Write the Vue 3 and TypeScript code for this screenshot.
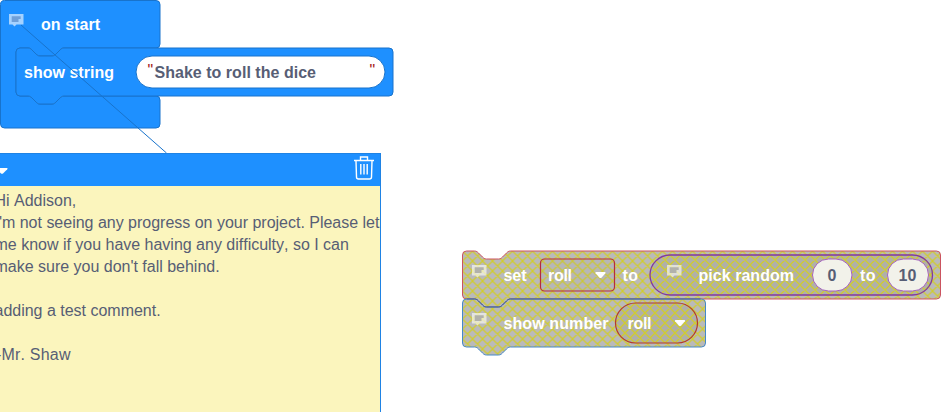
<script setup lang="ts">
interface Label {
  text: string
  x: number
  y: number
  width: number
  tone?: string
}

const labels: Label[] = [
  { text: 'on start', x: 41, y: 30, width: 59 },
  { text: 'show string', x: 24, y: 78, width: 90 },
  { text: 'Shake to roll the dice', x: 154.5, y: 78, width: 161.5, tone: 'dark' },
  { text: 'set', x: 503.5, y: 281, width: 23 },
  { text: 'roll', x: 548, y: 281, width: 24 },
  { text: 'to', x: 622.5, y: 281, width: 15.5 },
  { text: 'pick random', x: 698.5, y: 281, width: 95.5 },
  { text: '0', x: 827.5, y: 281, width: 9, tone: 'dark' },
  { text: 'to', x: 860, y: 281, width: 15.5 },
  { text: '10', x: 898.5, y: 281, width: 18, tone: 'dark' },
  { text: 'show number', x: 503.5, y: 329, width: 105 },
  { text: 'roll', x: 627.5, y: 329, width: 24 },
]

const commentIcons = [
  { x: 9, y: 14, tone: 'on-blue' },
  { x: 472, y: 265, tone: 'muted' },
  { x: 667, y: 265, tone: 'muted' },
  { x: 472, y: 313, tone: 'muted' },
]

const arrows = [
  { x: 595, y: 272 },
  { x: 674.5, y: 320 },
]

const hatches = [
  { id: 'hatch-set', x: 462.5, y: 251, tone: 'outer' },
  { id: 'hatch-show', x: 462.5, y: 299, tone: 'outer' },
  { id: 'hatch-inner', x: 650, y: 255, tone: 'inner' },
  { id: 'hatch-value', x: 615, y: 303, tone: 'inner' },
]

const note = `Hi Addison,
I'm not seeing any progress on your project. Please let
me know if you have having any difficulty, so I can
make sure you don't fall behind.

adding a test comment.
`
</script>

<template>
  <main class="workspace">
    <svg class="blocks" width="941" height="412" viewBox="0 0 941 412">
      <defs>
        <pattern v-for="hatch in hatches" :id="hatch.id" :key="hatch.id" :x="hatch.x" :y="hatch.y" width="10" height="10" patternUnits="userSpaceOnUse">
          <rect :class="hatch.tone" width="10" height="10" />
          <path class="hatch-line" d="M-1 -1L11 11M11 -1L-1 11M-1 9L1 11M9 -1L11 1M-1 1L1 -1M9 11L11 9" />
        </pattern>
      </defs>

      <path class="event" d="M.5 4.5a4 4 0 0 1 4-4H156a4 4 0 0 1 4 4V44a4 4 0 0 1-4 4H64c-2 0-3 1-4 2l-4 4c-1 1-2 2-4 2H40c-2 0-3-1-4-2l-4-4c-1-1-2-2-4-2h-8a4 4 0 0 0-4 4v40a4 4 0 0 0 4 4h8c2 0 3 1 4 2l4 4c1 1 2 2 4 2h12c2 0 3-1 4-2l4-4c1-1 2-2 4-2h92a4 4 0 0 1 4 4v24a4 4 0 0 1-4 4H4.500a4 4 0 0 1-4-4z" />
      <path class="event" d="M16 52a4 4 0 0 1 4-4h8c2 0 3 1 4 2l4 4c1 1 2 2 4 2h12c2 0 3-1 4-2l4-4c1-1 2-2 4-2h325a4 4 0 0 1 4 4v40a4 4 0 0 1-4 4H64c-2 0-3 1-4 2l-4 4c-1 1-2 2-4 2H40c-2 0-3-1-4-2l-4-4c-1-1-2-2-4-2h-8a4 4 0 0 1-4-4z" />
      <rect class="string-field" x="136" y="56" width="249" height="32" rx="16" />

      <path class="set-block" fill="url(#hatch-set)" d="M462.500 255a4 4 0 0 1 4-4h8c2 0 3 1 4 2l4 4c1 1 2 2 4 2h12c2 0 3-1 4-2l4-4c1-1 2-2 4-2h426a4 4 0 0 1 4 4v40a4 4 0 0 1-4 4h-426c-2 0-3 1-4 2l-4 4c-1 1-2 2-4 2h-12c-2 0-3-1-4-2l-4-4c-1-1-2-2-4-2h-8a4 4 0 0 1-4-4z" />
      <path class="show-block" fill="url(#hatch-show)" d="M462.500 303a4 4 0 0 1 4-4h8c2 0 3 1 4 2l4 4c1 1 2 2 4 2h12c2 0 3-1 4-2l4-4c1-1 2-2 4-2h191a4 4 0 0 1 4 4v40a4 4 0 0 1-4 4h-191c-2 0-3 1-4 2l-4 4c-1 1-2 2-4 2h-12c-2 0-3-1-4-2l-4-4c-1-1-2-2-4-2h-8a4 4 0 0 1-4-4z" />
      <path class="seam" d="M466.500 299h8c2 0 3 1 4 2l4 4c1 1 2 2 4 2h12c2 0 3-1 4-2l4-4c1-1 2-2 4-2h190" />
      <rect class="dropdown" x="540.500" y="259" width="74" height="32" rx="4" />
      <rect class="random-block" fill="url(#hatch-inner)" x="650" y="255" width="282.500" height="40" rx="20" />
      <rect class="number-field" x="812.500" y="259" width="39.500" height="32" rx="16" />
      <rect class="number-field" x="887.500" y="259" width="41" height="32" rx="16" />
      <rect class="variable" fill="url(#hatch-value)" x="615.500" y="303" width="82" height="40" rx="20" />

      <g v-for="icon in commentIcons" :key="`${icon.x}-${icon.y}`" :class="icon.tone" :transform="`translate(${icon.x} ${icon.y})`">
        <path class="bubble" d="M0 0h14.500v10.500H7.500L5.500 12.500 3.500 10.500H0z" />
        <path class="lines" d="M2.700 2.200h9v2.800H9.500v3H2.700z" />
      </g>
      <path v-for="arrow in arrows" :key="arrow.x" class="arrow" :transform="`translate(${arrow.x} ${arrow.y})`" d="M1 0h9q1 .5.400 1.300L6.500 5.700q-1 .8-2 0L.6 1.300Q0 .5 1 0z" />

      <text v-for="label in labels" :key="`${label.x}-${label.y}`" class="label" :class="label.tone" :x="label.x" :y="label.y" :textLength="label.width">{{ label.text }}</text>
      <text class="quote" x="147.500" y="76">"</text>
      <text class="quote" x="369.500" y="76">"</text>
      <path class="tether" d="M21 25L166.500 153" />
    </svg>

    <section class="comment">
      <header class="comment-bar">
        <svg class="collapse" width="12" height="8" viewBox="0 0 12 8">
          <path d="M1 1h10q1 .4.300 1.200L7 6.500q-1 .7-2 0L.7 2.200Q0 1.400 1 1z" />
        </svg>
        <svg class="trash" width="20" height="24" viewBox="0 0 20 24">
          <path d="M0 4.500h20M6.500 4V1h7v3M2 5l.500 16q0 2 2 2h11q2 0 2-2L18 5" />
          <path d="M6.800 8v10.500M10 8v10.500M13.200 8v10.500" />
        </svg>
      </header>
      <p class="comment-text">{{ note }}<span class="signature">-Mr. Shaw</span></p>
    </section>
  </main>
</template>

<style>
body {
  margin: 0;
  background: #fff;
}
</style>

<style scoped>
.workspace {
  position: relative;
  width: 941px;
  height: 412px;
  overflow: hidden;
  font-family: "Liberation Sans", Arial, sans-serif;
}
.blocks {
  display: block;
}
.event {
  fill: #1e90ff;
  stroke: #1873cc;
}
.string-field {
  fill: #fff;
  stroke: #1873cc;
}
.outer {
  fill: #bababa;
}
.inner {
  fill: #b0b0a8;
}
.hatch-line {
  stroke: #d0cc30;
  stroke-width: 1.3;
}
.set-block {
  stroke: #cb5360;
}
.show-block {
  stroke: #4689c8;
}
.seam {
  fill: none;
  stroke: #4b5c96;
}
.dropdown {
  fill: #999;
  fill-opacity: 0.1;
  stroke: #b52b3d;
  stroke-width: 1.2;
}
.random-block {
  stroke: #8138a0;
  stroke-width: 1.3;
}
.number-field {
  fill: #f2f2ea;
  stroke: #a45fc0;
}
.variable {
  stroke: #b3382f;
  stroke-width: 1.2;
}
.bubble {
  fill: #fff;
  opacity: 0.6;
}
.on-blue .lines {
  fill: #6f9fd8;
}
.muted .lines {
  fill: #b1b1ab;
}
.arrow,
.collapse {
  fill: #fff;
}
.label {
  fill: #fff;
  font-size: 16px;
  font-weight: 700;
}
.label.dark {
  fill: #575e75;
}
.quote {
  fill: #a31515;
  font-size: 16px;
}
.tether {
  fill: none;
  stroke: #1873cc;
}
.comment {
  position: absolute;
  left: -20px;
  top: 153px;
  box-sizing: border-box;
  width: 401px;
  height: 280px;
  border: 1px solid #1f83e4;
  background: #fbf5bd;
}
.comment-bar {
  display: flex;
  align-items: center;
  justify-content: space-between;
  box-sizing: border-box;
  height: 32px;
  padding: 0 6px 4px 15px;
  background: #1e90ff;
}
.collapse {
  margin-top: 5px;
}
.trash {
  fill: none;
  stroke: #fff;
  stroke-width: 1.4;
}
.comment-text {
  margin: 0;
  padding: 4px 0 0 13.500px;
  color: #575e75;
  font-size: 16px;
  font-kerning: none;
  line-height: 22px;
  letter-spacing: -0.01px;
  white-space: pre;
}
.signature {
  display: block;
  margin-top: 22px;
  padding-left: 1.500px;
  letter-spacing: 0.2px;
}
</style>
